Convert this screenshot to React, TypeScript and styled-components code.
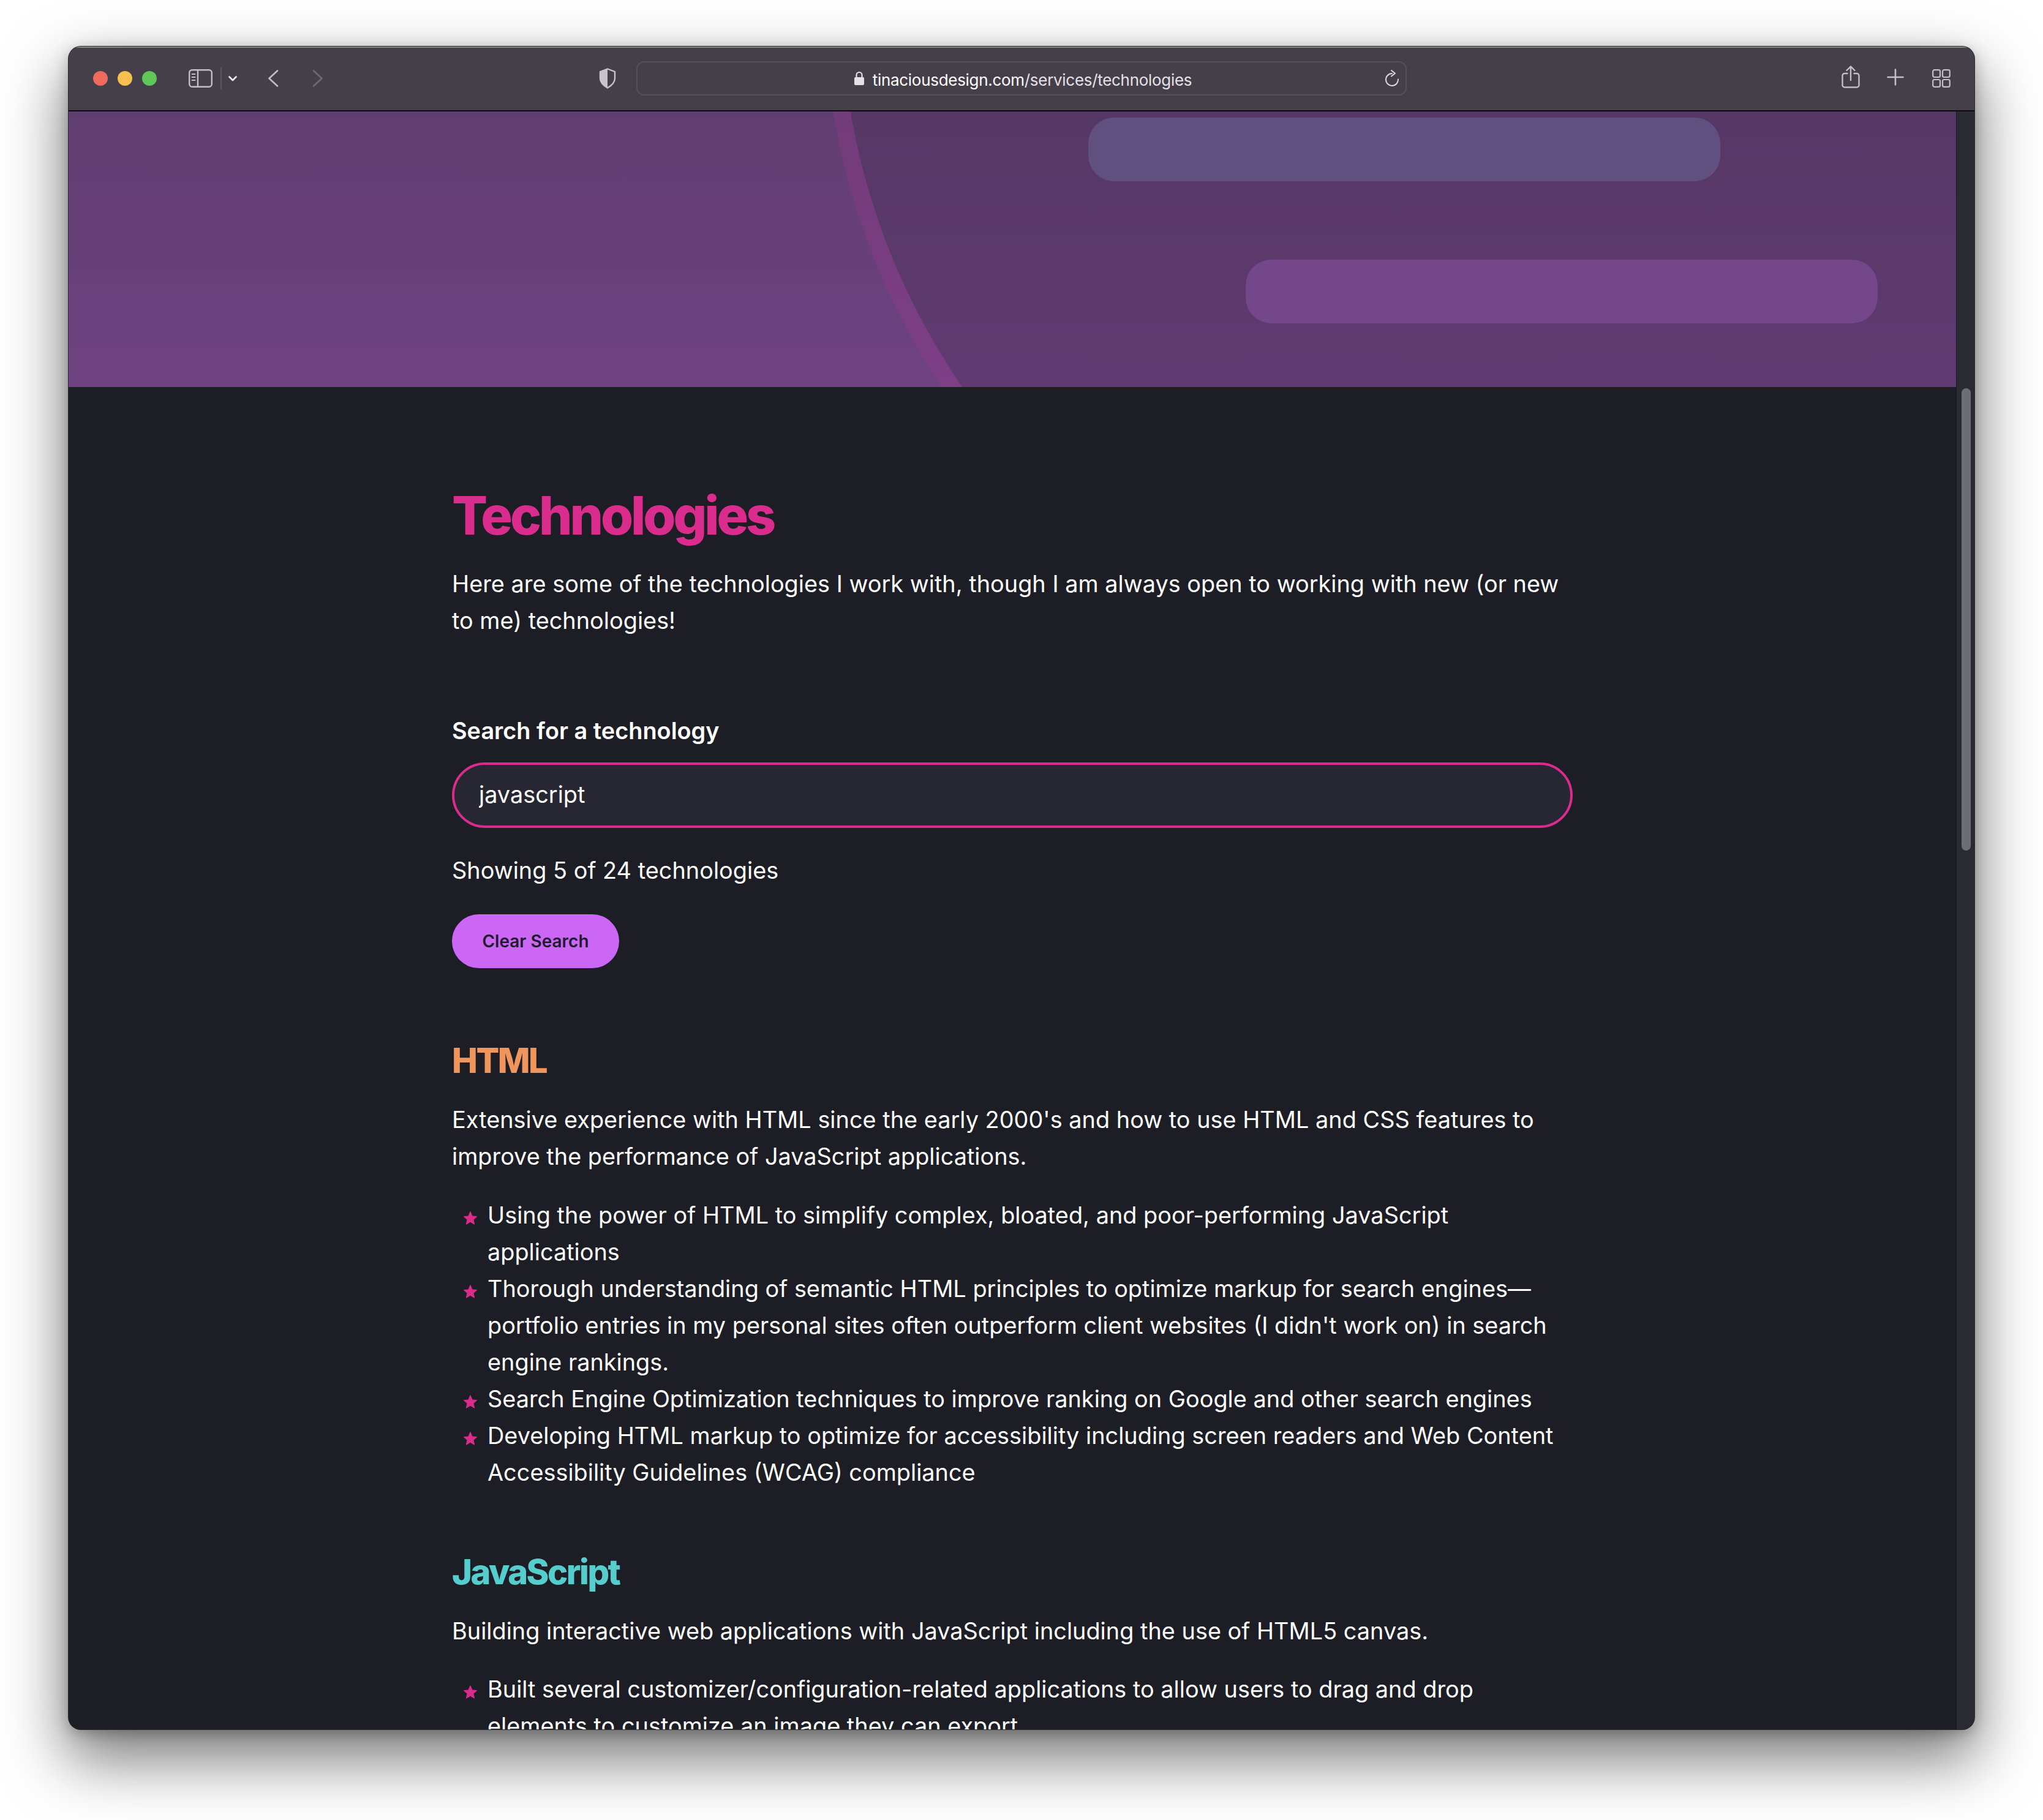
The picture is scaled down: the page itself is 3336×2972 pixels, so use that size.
import React from "react";
import styled, { createGlobalStyle } from "styled-components";

const Global = createGlobalStyle`
  html, body { margin: 0; padding: 0; background: #fff; }
  * { box-sizing: border-box; }
  body { font-family: Inter, "Noto Sans", sans-serif; }
`;

const Stage = styled.div`
  width: 3336px;
  height: 2972px;
  padding: 76px 112px 148px;
  background: #fff;
  overflow: hidden;
`;

const BrowserWindow = styled.div`
  display: flex;
  flex-direction: column;
  width: 3112px;
  height: 2748px;
  border-radius: 20px;
  overflow: hidden;
  background: #1d1d26;
  box-shadow: 0 0 0 1px #2a2a2e, 0 44px 100px 6px rgba(0, 0, 0, 0.52), 0 6px 24px rgba(0, 0, 0, 0.25);
`;

const Toolbar = styled.header`
  flex: 0 0 106px;
  display: flex;
  align-items: center;
  padding: 0 39px 2px 40px;
  background: #453f49;
  border-top: 2px solid #8b878d;
  border-bottom: 2px solid #0b0a0d;
`;

const Dot = styled.span<{ $c: string }>`
  width: 24px;
  height: 24px;
  border-radius: 50%;
  margin-right: 16px;
  background: ${(p) => p.$c};
`;

const IconWrap = styled.span<{ $ml: number; $mb?: number }>`
  display: inline-flex;
  margin-left: ${(p) => p.$ml}px;
  margin-bottom: ${(p) => p.$mb ?? 0}px;
`;

const Divider = styled.span`
  width: 2px;
  height: 36px;
  margin-left: 13px;
  background: #5a555e;
`;

const UrlBar = styled.div`
  position: relative;
  display: flex;
  align-items: center;
  justify-content: center;
  gap: 13px;
  width: 1258px;
  height: 56px;
  margin-left: 33px;
  padding-left: 4px;
  border: 2px solid #56525a;
  border-radius: 13px;
  font-size: 26px;
  letter-spacing: -0.3px;
  color: #ffffff;
`;

const UrlText = styled.span`
  position: relative;
  top: 2px;
`;

const UrlMuted = styled.span`
  color: #e4e1e6;
`;

const ReloadSlot = styled.span`
  position: absolute;
  right: 10px;
  top: 11px;
  display: inline-flex;
`;

const Spacer = styled.span`
  flex: 1;
`;

const Body = styled.div`
  flex: 1;
  display: flex;
  min-height: 0;
`;

const Page = styled.main`
  flex: 1;
  min-width: 0;
  overflow: hidden;
`;

const ScrollTrack = styled.aside`
  flex: 0 0 29px;
  padding: 452px 6px 0 8px;
  background: #2a2a33;
  border-left: 1px solid #1c1c22;
`;

const ScrollThumb = styled.div`
  width: 15px;
  height: 755px;
  border-radius: 8px;
  background: #6d6d74;
`;

const Hero = styled.section`
  position: relative;
  height: 450px;
  overflow: hidden;
  background: linear-gradient(180deg, #613e71 0%, #6e4280 100%);
`;

const HeroCircle = styled.div`
  position: absolute;
  left: 1233px;
  top: -1341px;
  width: 2306px;
  height: 2306px;
  border-radius: 50%;
  border: 28px solid rgba(217, 44, 170, 0.15);
  background: rgba(40, 30, 55, 0.2);
  background-clip: padding-box;
`;

const HeroPill = styled.div<{ $l: number; $t: number; $c: string }>`
  position: absolute;
  left: ${(p) => p.$l}px;
  top: ${(p) => p.$t}px;
  width: 1032px;
  height: 104px;
  border-radius: 42px;
  background: ${(p) => p.$c};
`;

const Column = styled.div`
  width: 1830px;
  margin: 0 auto;
  padding-top: 157px;
`;

const Title = styled.h1`
  margin: 0 0 28px;
  font-size: 86px;
  line-height: 106px;
  font-weight: 800;
  letter-spacing: -0.048em;
  color: #d92c8c;
`;

const Paragraph = styled.p<{ $mb: number }>`
  margin: 0 0 ${(p) => p.$mb}px;
  font-size: 37.87px;
  line-height: 60px;
  color: #fff;
`;

const Label = styled.label`
  display: block;
  margin-bottom: 22px;
  font-size: 37.87px;
  line-height: 60px;
  font-weight: 600;
  color: #fff;
`;

const SearchInput = styled.input`
  display: block;
  width: 100%;
  height: 107px;
  margin-bottom: 39px;
  padding: 0 40px 3px;
  border: 4px solid #d92c8c;
  border-radius: 54px;
  outline: none;
  background: #272733;
  color: #fff;
  font-family: inherit;
  font-size: 37.87px;
`;

const ClearButton = styled.button`
  display: block;
  height: 88px;
  width: 273px;
  padding: 0;
  margin: 0 0 115px;
  border: 0;
  border-radius: 44px;
  background: #cc66f5;
  color: #1e1a2e;
  font-family: inherit;
  font-size: 28px;
  font-weight: 600;
`;

const Heading = styled.h2<{ $c: string }>`
  margin: 0 0 30px;
  font-size: 56px;
  line-height: 72px;
  font-weight: 800;
  letter-spacing: -0.045em;
  color: ${(p) => p.$c};
`;

const Bullets = styled.ul`
  margin: 0 0 97px;
  padding: 0;
  list-style: none;
`;

const Bullet = styled.li`
  display: flex;
  gap: 17px;
  padding-left: 19px;
  font-size: 37.87px;
  line-height: 60px;
  color: #fff;
`;

const StarMark = styled.svg`
  flex: 0 0 22px;
  width: 22px;
  height: 22px;
  margin-top: 24px;
`;

const Star = () => (
  <StarMark viewBox="0.8 0.8 20.4 20">
    <path
      d="M11 1.500 L13.800 8 L20.600 8.600 L15.400 13.100 L17 20 L11 16.400 L5 20 L6.600 13.100 L1.400 8.600 L8.200 8 Z"
      fill="#d92c8c"
      stroke="#d92c8c"
      strokeWidth="1.200"
      strokeLinejoin="round"
    />
  </StarMark>
);

const line = { fill: "none", strokeLinecap: "round", strokeLinejoin: "round" } as const;

const SidebarIcon = () => (
  <svg width="39" height="30" viewBox="0 0 39 30">
    <rect x="1.200" y="1.200" width="36.600" height="27.600" rx="4.500" stroke="#c4bec9" strokeWidth="2.400" fill="none" />
    <path d="M15 1v28" stroke="#c4bec9" strokeWidth="2.400" />
    <path d="M5.500 8h5M5.500 13h5M5.500 18h5" stroke="#c4bec9" strokeWidth="1.800" {...line} />
  </svg>
);

const Chevron = ({ d, c, w, h, sw }: { d: string; c: string; w: number; h: number; sw: number }) => (
  <svg width={w} height={h} viewBox={`0 0 ${w} ${h}`}>
    <path d={d} stroke={c} strokeWidth={sw} {...line} />
  </svg>
);

const ShieldIcon = () => (
  <svg width="28" height="34" viewBox="0 0 28 34">
    <path
      d="M14 1.500 L26 6 V17 C26 24 20 29 14 32.500 C8 29 2 24 2 17 V6 Z"
      fill="none"
      stroke="#c9c3d0"
      strokeWidth="2.400"
      strokeLinejoin="round"
    />
    <path d="M14 1.500 L2 6 V17 C2 24 8 29 14 32.500 Z" fill="#c9c3d0" />
  </svg>
);

const LockIcon = () => (
  <svg width="18" height="24" viewBox="0 0 18 24">
    <rect x="1" y="10" width="16" height="13" rx="2" fill="#e4e1e6" />
    <path d="M4.500 10V6.500a4.500 4.500 0 0 1 9 0V10" stroke="#e4e1e6" strokeWidth="2.200" fill="none" />
  </svg>
);

const ReloadIcon = () => (
  <svg width="24" height="28" viewBox="0 0 24 28">
    <path d="M12 7 A10 10 0 1 0 22 16.500" stroke="#dcd8de" strokeWidth="2" {...line} />
    <path d="M11 2 L17 6.800 L11 11.500" stroke="#dcd8de" strokeWidth="2" {...line} />
  </svg>
);

const ShareIcon = () => (
  <svg width="30" height="37" viewBox="0 0 30 37">
    <path
      d="M9.500 13H5a3.500 3.500 0 0 0-3.500 3.500V32A3.500 3.500 0 0 0 5 35.500h20a3.500 3.500 0 0 0 3.500-3.500V16.500A3.500 3.500 0 0 0 25 13h-4.500"
      stroke="#c4bec9"
      strokeWidth="2.400"
      {...line}
    />
    <path d="M15 24V2M8.500 8 15 1.500 21.500 8" stroke="#c4bec9" strokeWidth="2.400" {...line} />
  </svg>
);

const PlusIcon = () => (
  <svg width="28" height="28" viewBox="0 0 28 28">
    <path d="M14 1.500v25M1.500 14h25" stroke="#c4bec9" strokeWidth="2.600" strokeLinecap="round" />
  </svg>
);

const GridIcon = () => (
  <svg width="30" height="30" viewBox="0 0 30 30">
    {[
      [1.2, 1.2],
      [17, 1.2],
      [1.2, 17],
      [17, 17],
    ].map(([x, y]) => (
      <rect key={`${x}-${y}`} x={x} y={y} width="11.800" height="11.800" rx="2.500" stroke="#c4bec9" strokeWidth="2.200" fill="none" />
    ))}
  </svg>
);

export default function App() {
  return (
    <>
      <Global />
      <Stage>
        <BrowserWindow>
          <Toolbar>
            <Dot $c="#f16a5e" />
            <Dot $c="#f6c04f" />
            <Dot $c="#5fc858" />
            <IconWrap $ml={36}>
              <SidebarIcon />
            </IconWrap>
            <Divider />
            <IconWrap $ml={11}>
              <Chevron d="M1.500 1.500 7 7l5.500-5.500" c="#efecf1" w={14} h={9} sw={2.600} />
            </IconWrap>
            <IconWrap $ml={51}>
              <Chevron d="M15 1.500 1.500 14 15 26.500" c="#c4bec9" w={17} h={28} sw={2.600} />
            </IconWrap>
            <IconWrap $ml={55}>
              <Chevron d="M2 1.500 15.500 14 2 26.500" c="#6e6a72" w={17} h={28} sw={2.600} />
            </IconWrap>
            <IconWrap $ml={451}>
              <ShieldIcon />
            </IconWrap>
            <UrlBar>
              <LockIcon />
              <UrlText>
                tinaciousdesign.com<UrlMuted>/services/technologies</UrlMuted>
              </UrlText>
              <ReloadSlot>
                <ReloadIcon />
              </ReloadSlot>
            </UrlBar>
            <Spacer />
            <IconWrap $ml={0} $mb={5}>
              <ShareIcon />
            </IconWrap>
            <IconWrap $ml={44} $mb={4}>
              <PlusIcon />
            </IconWrap>
            <IconWrap $ml={46} $mb={1}>
              <GridIcon />
            </IconWrap>
          </Toolbar>
          <Body>
            <Page>
              <Hero>
                <HeroCircle />
                <HeroPill $l={1665} $t={10} $c="#5f5080" />
                <HeroPill $l={1922} $t={242} $c="#74468a" />
              </Hero>
              <Column>
                <Title>Technologies</Title>
                <Paragraph $mb={120}>
                  Here are some of the technologies I work with, though I am always open to working with new (or new to
                  me) technologies!
                </Paragraph>
                <Label htmlFor="tech-search">Search for a technology</Label>
                <SearchInput id="tech-search" value="javascript" readOnly />
                <Paragraph $mb={42}>Showing 5 of 24 technologies</Paragraph>
                <ClearButton>Clear Search</ClearButton>

                <Heading $c="#f0955c">HTML</Heading>
                <Paragraph $mb={36}>
                  Extensive experience with HTML since the early 2000's and how to use HTML and CSS features to improve
                  the performance of JavaScript applications.
                </Paragraph>
                <Bullets>
                  <Bullet>
                    <Star />
                    <span>
                      Using the power of HTML to simplify complex, bloated, and poor-performing JavaScript applications
                    </span>
                  </Bullet>
                  <Bullet>
                    <Star />
                    <span>
                      Thorough understanding of semantic HTML principles to optimize markup for search engines—portfolio
                      entries in my personal sites often outperform client websites (I didn't work on) in search engine
                      rankings.
                    </span>
                  </Bullet>
                  <Bullet>
                    <Star />
                    <span>Search Engine Optimization techniques to improve ranking on Google and other search engines</span>
                  </Bullet>
                  <Bullet>
                    <Star />
                    <span>
                      Developing HTML markup to optimize for accessibility including screen readers and Web Content
                      Accessibility Guidelines (WCAG) compliance
                    </span>
                  </Bullet>
                </Bullets>

                <Heading $c="#56cdcd">JavaScript</Heading>
                <Paragraph $mb={35}>
                  Building interactive web applications with JavaScript including the use of HTML5 canvas.
                </Paragraph>
                <Bullets>
                  <Bullet>
                    <Star />
                    <span>
                      Built several customizer/configuration-related applications to allow users to drag and drop
                      elements to customize an image they can export.
                    </span>
                  </Bullet>
                </Bullets>
              </Column>
            </Page>
            <ScrollTrack>
              <ScrollThumb />
            </ScrollTrack>
          </Body>
        </BrowserWindow>
      </Stage>
    </>
  );
}
